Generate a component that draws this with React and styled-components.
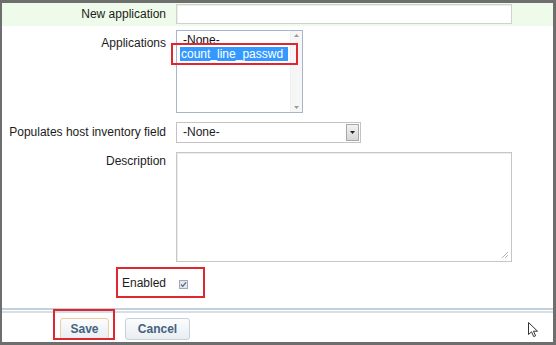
import React from 'react';
import styled, { createGlobalStyle } from 'styled-components';

const Global = createGlobalStyle`
  html, body { margin: 0; padding: 0; background: #fff; }
  body { font-family: "Liberation Sans", Arial, sans-serif; font-size: 12px; color: #1c1c1c; }
`;

const Frame = styled.div`
  position: relative;
  width: 556px;
  height: 345px;
  box-sizing: border-box;
  border: 3px solid #6e6e6e;
  border-left-width: 2px;
  background: #fff;
  display: flex;
  flex-direction: column;
`;

const Row = styled.div`
  display: grid;
  grid-template-columns: 174px 1fr;
  align-items: start;
  padding: ${p => p.$pad || '0'};
  background: ${p => p.$bg || 'transparent'};
`;

const Label = styled.div`
  text-align: right;
  padding-right: 10px;
  padding-top: ${p => p.$top || 0}px;
  line-height: ${p => p.$lh || 14}px;
  white-space: nowrap;
`;

const TextInput = styled.div`
  box-sizing: border-box;
  width: 336px;
  height: 20px;
  border: 1px solid #cfd3c9;
  background: #fff;
  box-shadow: inset 1px 1px 0 #eceee8;
`;

const ListBox = styled.div`
  box-sizing: border-box;
  width: 127px;
  height: 83px;
  border: 1px solid #a9b3cc;
  background: #fff;
  display: flex;
`;

const ListItems = styled.div`
  flex: 1;
  padding: 2px 0 0 3px;
`;

const Option = styled.div`
  padding-left: ${p => (p.$sel ? 1 : 3)}px;
  width: 108px;
  height: 14px;
  line-height: 14px;
  box-sizing: border-box;
  background: ${p => (p.$sel ? '#3399ff' : 'transparent')};
  color: ${p => (p.$sel ? '#fff' : '#111')};
  white-space: nowrap;
`;

const ScrollBar = styled.div`
  width: 11px;
  background: #f6f6f6;
  border-left: 1px solid #f0f0f0;
  display: flex;
  flex-direction: column;
  justify-content: space-between;
  align-items: center;
  padding: 3px 0;
`;

const Select = styled.div`
  box-sizing: border-box;
  width: 185px;
  height: 21px;
  border: 1px solid #c3c3c3;
  background: #fff;
  display: flex;
  align-items: center;
  padding: 0 1px 0 6px;
`;

const SelectText = styled.span`
  flex: 1;
  line-height: 19px;
`;

const SelectBtn = styled.div`
  width: 11px;
  height: 15px;
  border: 1px solid #a8a8a8;
  background: linear-gradient(#f2f2f2, #d6d6d6);
  display: flex;
  align-items: center;
  justify-content: center;
`;

const TextArea = styled.div`
  position: relative;
  box-sizing: border-box;
  width: 336px;
  height: 110px;
  border: 1px solid #c6c6c6;
  box-shadow: inset 1px 1px 0 #eeeeee;
  background: #fff;
`;

const Grip = styled.svg`
  position: absolute;
  right: 2px;
  bottom: 2px;
`;

const CheckWrap = styled.div`
  padding: 2px 0 0 3px;
`;

const Separator = styled.div`
  margin-top: 16px;
  height: 1px;
  border-top: 2px solid #c4d0d9;
  border-bottom: 2px solid #d6dfe6;
`;

const Footer = styled.div`
  display: flex;
  gap: 16px;
  padding: 5px 0 0 58px;
`;

const Button = styled.div`
  box-sizing: border-box;
  width: ${p => p.$w}px;
  height: 22px;
  border: 1px solid ${p => (p.$focus ? '#f1c9a2' : '#c6d0d9')};
  border-radius: 3px;
  background: linear-gradient(#fbfcfd, #e9eef2);
  color: #45617f;
  font-weight: bold;
  font-size: 12px;
  display: flex;
  align-items: center;
  justify-content: center;
`;

const Mark = styled.div`
  position: absolute;
  left: ${p => p.$x}px;
  top: ${p => p.$y}px;
  width: ${p => p.$w}px;
  height: ${p => p.$h}px;
  box-sizing: border-box;
  border: 2px solid #e0262e;
  pointer-events: none;
`;

const Cursor = styled.svg`
  position: absolute;
  left: 526px;
  top: 319px;
`;

const Tri = ({ up }) => (
  <svg width="5" height="3" viewBox="0 0 5 3">
    <path d={up ? 'M0 3 L2.5 0 L5 3 Z' : 'M0 0 L2.5 3 L5 0 Z'} fill="#9a9a9a" />
  </svg>
);

export default function App() {
  return (
    <>
      <Global />
      <Frame>
        <Row $bg="#effbea" $pad="1px 0 2px">
          <Label $lh={20}>New application</Label>
          <TextInput />
        </Row>
        <Row $pad="4px 0 0">
          <Label $top={6}>Applications</Label>
          <ListBox>
            <ListItems>
              <Option>-None-</Option>
              <Option $sel>count_line_passwd</Option>
            </ListItems>
            <ScrollBar>
              <Tri up />
              <Tri />
            </ScrollBar>
          </ListBox>
        </Row>
        <Row $pad="9px 0 0">
          <Label $lh={21}>Populates host inventory field</Label>
          <Select>
            <SelectText>-None-</SelectText>
            <SelectBtn>
              <svg width="5" height="3" viewBox="0 0 5 3">
                <path d="M0 0 L2.5 3 L5 0 Z" fill="#222" />
              </svg>
            </SelectBtn>
          </Select>
        </Row>
        <Row $pad="9px 0 0">
          <Label $top={2}>Description</Label>
          <TextArea>
            <Grip width="8" height="8" viewBox="0 0 8 8">
              <path d="M7 1 L1 7 M7 4 L4 7" stroke="#b5b5b5" strokeWidth="1" />
            </Grip>
          </TextArea>
        </Row>
        <Row $pad="14px 0 0">
          <Label>Enabled</Label>
          <CheckWrap>
            <svg width="9" height="9" viewBox="0 0 9 9">
              <rect x="0.5" y="0.5" width="8" height="8" fill="#e3e6ee" stroke="#a3a8b6" />
              <path d="M2 4.5 L3.8 6.3 L7 2.3" fill="none" stroke="#5a6478" strokeWidth="1.2" />
            </svg>
          </CheckWrap>
        </Row>
        <Separator />
        <Footer>
          <Button $w={49} $focus>Save</Button>
          <Button $w={65}>Cancel</Button>
        </Footer>
        <Mark $x={169} $y={40} $w={127} $h={22} />
        <Mark $x={114} $y={264} $w={89} $h={31} />
        <Mark $x={51} $y={306} $w={62} $h={31} />
        <Cursor width="11" height="16" viewBox="0 0 11 16">
          <path d="M0.5 0.5 L0.5 12.5 L3.5 9.8 L5.7 14.6 L7.6 13.8 L5.5 9.2 L9.5 9.2 Z" fill="#fff" stroke="#333" strokeWidth="1" strokeLinejoin="round" />
        </Cursor>
      </Frame>
    </>
  );
}
